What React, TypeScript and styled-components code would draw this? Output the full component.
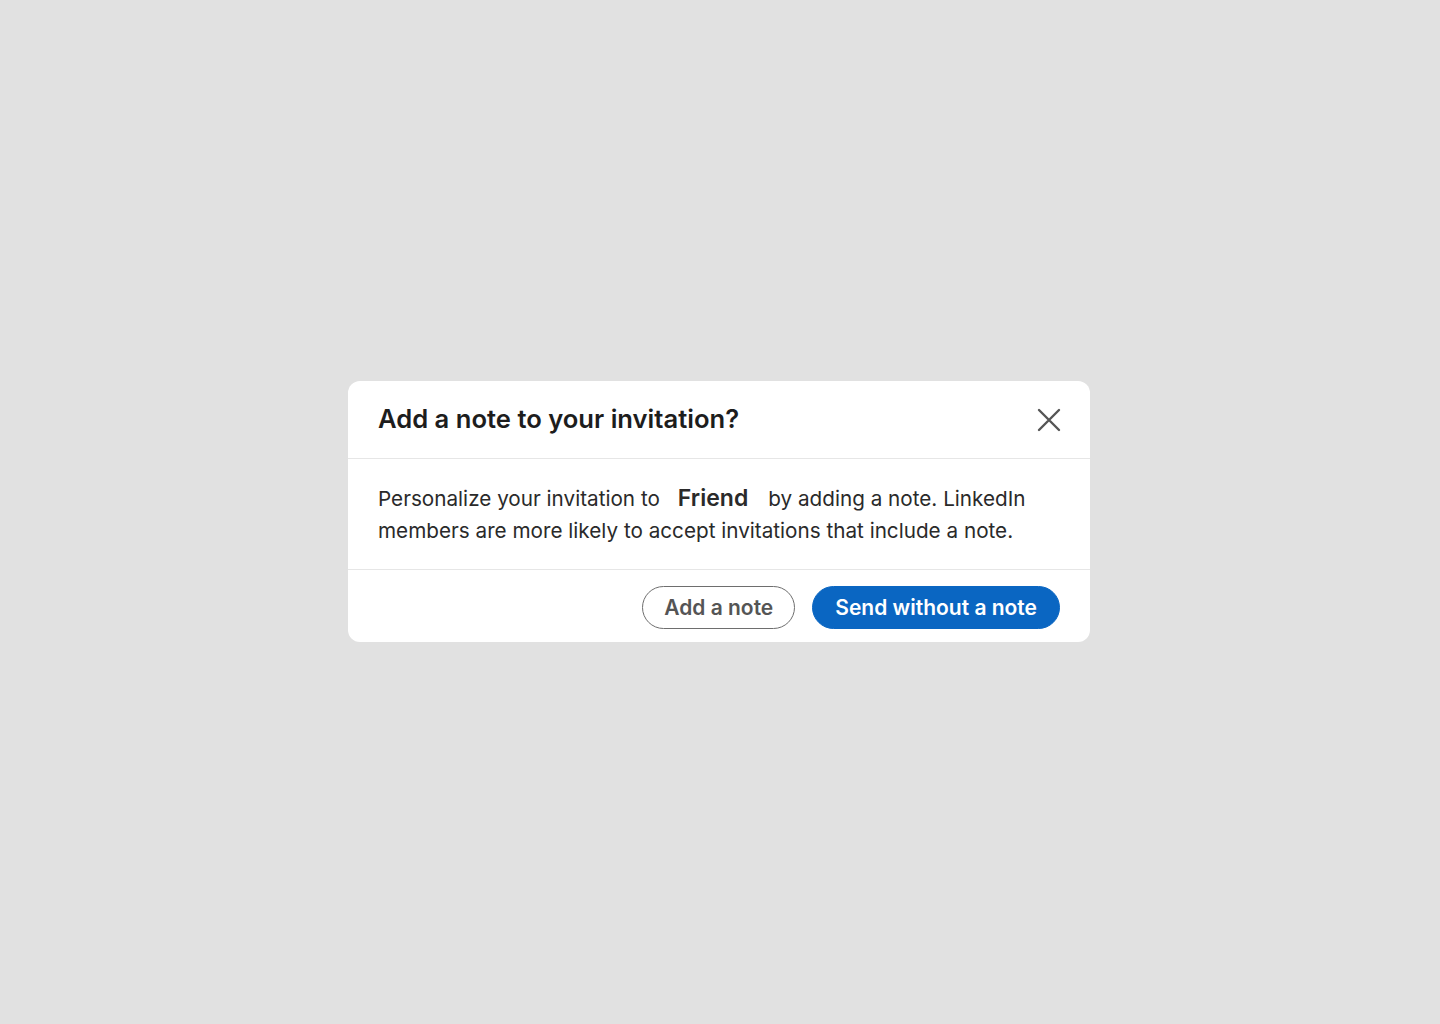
import React from "react";
import styled, { createGlobalStyle } from "styled-components";

const Global = createGlobalStyle`
  html, body { margin: 0; padding: 0; }
  body {
    background: #e1e1e1;
    font-family: Inter, "Noto Sans", "Liberation Sans", sans-serif;
    -webkit-font-smoothing: antialiased;
  }
`;

const Page = styled.div`
  width: 1440px;
  height: 1024px;
  display: flex;
  align-items: flex-start;
  justify-content: center;
  padding-top: 381px;
  box-sizing: border-box;
`;

const Modal = styled.div`
  width: 742px;
  background: #ffffff;
  border-radius: 12px;
  display: flex;
  flex-direction: column;
  margin-left: -2px;
`;

const Header = styled.div`
  height: 78px;
  box-sizing: border-box;
  display: flex;
  align-items: center;
  justify-content: space-between;
  padding: 0 26px 0 30px;
  border-bottom: 1px solid #e6e6e6;
`;

const Title = styled.h2`
  margin: 0 0 3px 0;
  font-size: 25.6px;
  font-weight: 600;
  color: #1d1d1d;
`;

const CloseButton = styled.button`
  width: 30px;
  height: 30px;
  border: none;
  background: transparent;
  padding: 0;
  display: flex;
  align-items: center;
  justify-content: center;
  color: #555555;
  cursor: pointer;
`;

const Body = styled.div`
  padding: 23px 30px 22px 30px;
  border-bottom: 1px solid #e6e6e6;
`;

const Text = styled.p`
  margin: 0;
  font-size: 20.7px;
  line-height: 32px;
  color: #2a2a2a;
`;

const Name = styled.strong`
  font-size: 23px;
  font-weight: 600;
  margin: 0 20px 0 18px;
  color: #2a2a2a;
`;

const Footer = styled.div`
  height: 72px;
  box-sizing: border-box;
  display: flex;
  justify-content: flex-end;
  align-items: flex-start;
  gap: 17px;
  padding: 16px 30px 0 30px;
`;

const Button = styled.button<{ $primary?: boolean }>`
  height: 43px;
  box-sizing: border-box;
  border-radius: 22px;
  padding: 0 ${(p) => (p.$primary ? "22px" : "21px")};
  font-family: inherit;
  font-size: 21px;
  font-weight: 600;
  cursor: pointer;
  border: 1px solid ${(p) => (p.$primary ? "#0a66c2" : "#6e6e6e")};
  background: ${(p) => (p.$primary ? "#0a66c2" : "#ffffff")};
  color: ${(p) => (p.$primary ? "#ffffff" : "#555555")};
`;

export default function App() {
  return (
    <>
      <Global />
      <Page>
        <Modal>
          <Header>
            <Title>Add a note to your invitation?</Title>
            <CloseButton aria-label="Dismiss">
              <svg width="24" height="24" viewBox="0 0 24 24" fill="none">
                <path d="M2 2 L22 22 M22 2 L2 22" stroke="currentColor" strokeWidth="2.4" strokeLinecap="round" />
              </svg>
            </CloseButton>
          </Header>
          <Body>
            <Text>
              Personalize your invitation to<Name>Friend</Name>by adding a note. LinkedIn members are more
              likely to accept invitations that include a note.
            </Text>
          </Body>
          <Footer>
            <Button>Add a note</Button>
            <Button $primary>Send without a note</Button>
          </Footer>
        </Modal>
      </Page>
    </>
  );
}
